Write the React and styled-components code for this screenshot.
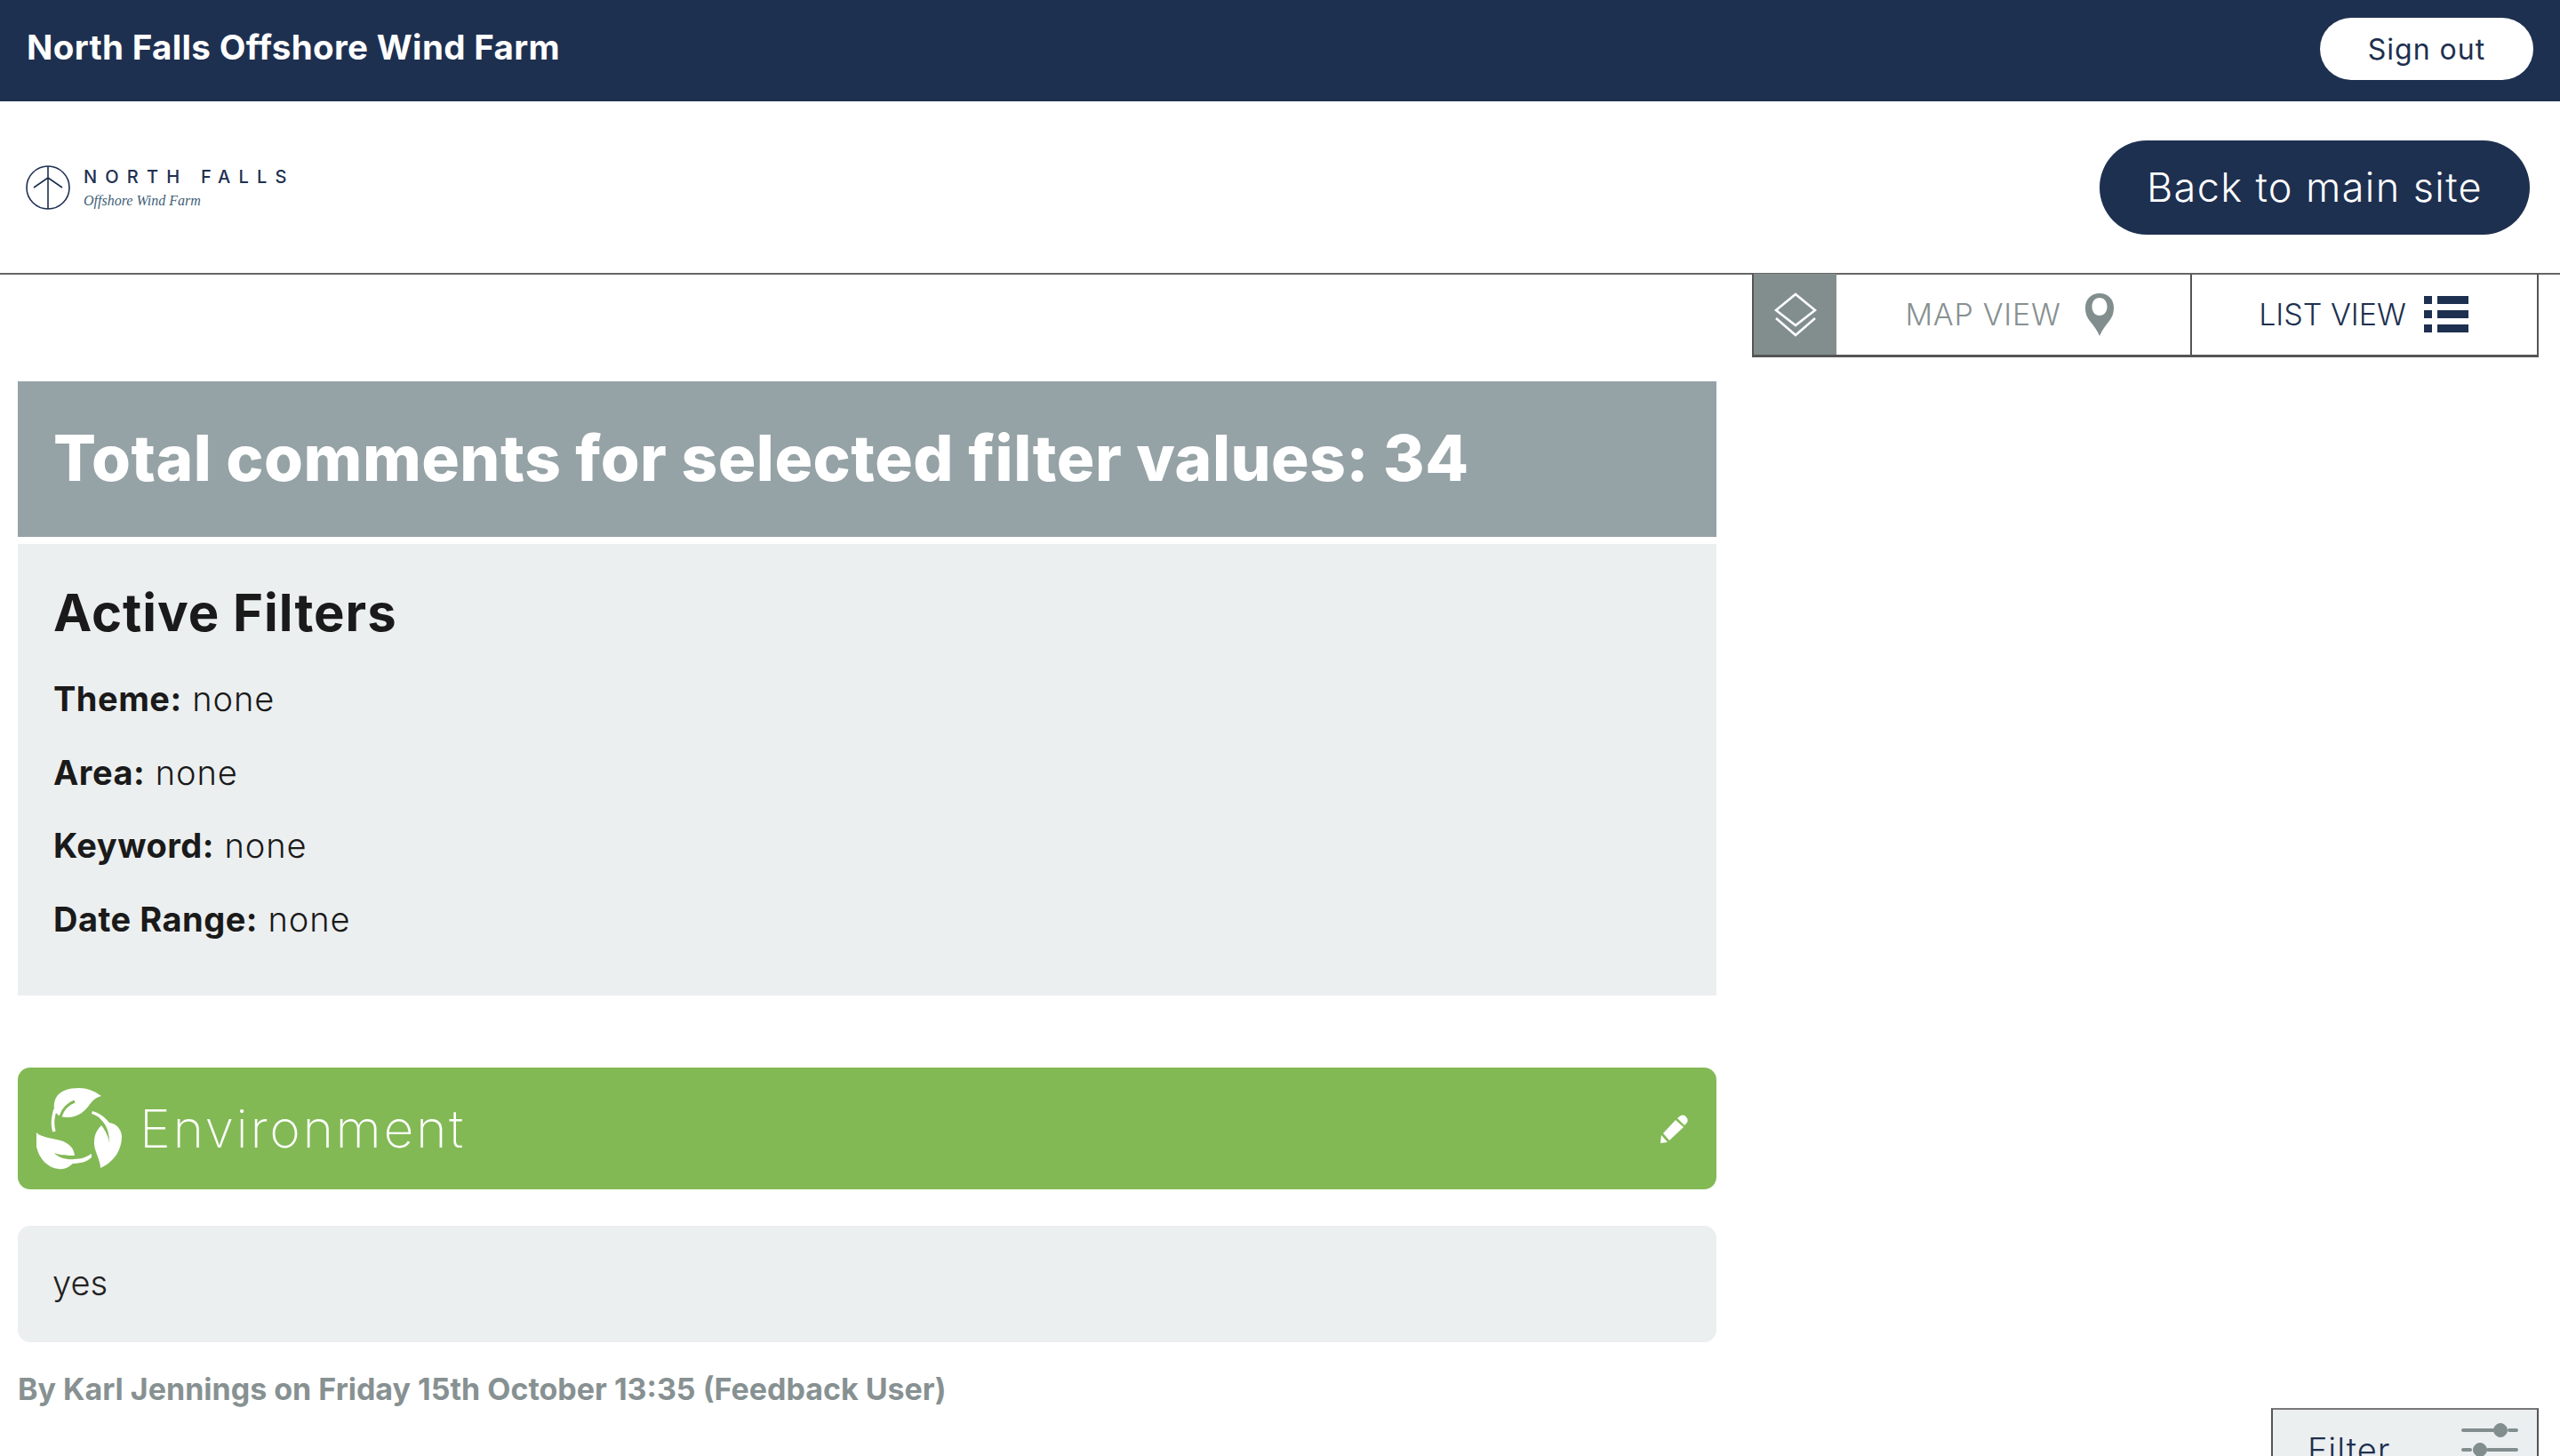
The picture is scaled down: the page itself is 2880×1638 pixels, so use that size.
import React from "react";
import styled, { createGlobalStyle } from "styled-components";

const Global = createGlobalStyle`
  html, body { margin: 0; padding: 0; background: #fff; overflow: hidden; }
  * { box-sizing: border-box; }
  body { font-family: Inter, "Liberation Sans", sans-serif; }
`;

const Page = styled.div`
  position: relative;
  width: 2880px;
  height: 1638px;
  overflow: hidden;
`;

const TopBar = styled.div`
  height: 114px;
  background: #1e3050;
  display: flex;
  align-items: flex-start;
  justify-content: space-between;
  padding: 20px 30px 0 30px;
`;

const SiteTitle = styled.div`
  color: #fff;
  font-size: 38.5px;
  font-weight: 700;
  line-height: 46px;
  margin-top: 10px;
  letter-spacing: 0.35px;
`;

const SignOut = styled.button`
  width: 240px;
  height: 70px;
  border: 0;
  border-radius: 35px;
  background: #fff;
  color: #1e3050;
  font: 400 32px Inter, sans-serif;
  letter-spacing: 1px;
`;

const Header = styled.div`
  height: 195px;
  border-bottom: 2px solid #666;
  display: flex;
  align-items: flex-start;
  justify-content: space-between;
  padding: 44px 34px 0 29px;
`;

const Logo = styled.div`
  display: flex;
  gap: 15px;
  margin-top: 28px;
`;

const LogoText = styled.div`
  display: flex;
  flex-direction: column;
`;

const LogoName = styled.div`
  color: #1e3050;
  font-size: 20px;
  line-height: 20px;
  font-weight: 500;
  letter-spacing: 9.2px;
  margin-top: 3px;
`;

const LogoSub = styled.div`
  color: #3f5f78;
  font: italic 400 16px/20px "Liberation Serif", serif;
  margin-top: 7px;
`;

const BackButton = styled.button`
  width: 484px;
  height: 106px;
  border: 0;
  border-radius: 53px;
  background: #1e3050;
  color: #fff;
  font: 300 45px Inter, sans-serif;
  letter-spacing: 1.4px;
  padding-bottom: 2px;
`;

const Content = styled.div`
  display: grid;
  grid-template-columns: 1971px 885px;
`;

const Main = styled.main`
  padding: 120px 40px 0 20px;
`;

const Banner = styled.div`
  height: 175px;
  background: #95a2a6;
  color: #fff;
  display: flex;
  align-items: center;
  padding: 0 40px 4px;
  font-size: 71px;
  font-weight: 800;
  letter-spacing: 0.5px;
`;

const FilterPanel = styled.section`
  margin-top: 8px;
  height: 508px;
  background: #eceff0;
  padding: 44px 40px 0;
  color: #1a1a1a;
`;

const FilterHeading = styled.h2`
  margin: 0 0 41px;
  font-size: 58px;
  line-height: 66px;
  font-weight: 700;
  letter-spacing: 1px;
`;

const FilterRow = styled.div`
  height: 82.5px;
  font-size: 38px;
  line-height: 46px;
  font-weight: 300;
  letter-spacing: 0.9px;
  b { font-weight: 700; letter-spacing: 0.5px; }
`;

const ThemeBar = styled.div`
  margin-top: 81px;
  height: 137px;
  border-radius: 14px;
  background: #82b955;
  color: #fff;
  display: flex;
  align-items: center;
  padding: 0 32px 0 20px;
`;

const ThemeName = styled.div`
  flex: 1;
  margin-left: 19px;
  font-size: 59px;
  font-weight: 200;
  letter-spacing: 2.6px;
`;

const Comment = styled.div`
  margin-top: 41px;
  height: 131px;
  border-radius: 14px;
  background: #eceff0;
  color: #222;
  font-size: 38px;
  font-weight: 300;
  display: flex;
  align-items: center;
  padding: 0 40px 4px 39px;
`;

const Byline = styled.div`
  margin-top: 32px;
  color: #879192;
  font-size: 34px;
  line-height: 42px;
  font-weight: 700;
  letter-spacing: 0;
`;

const Tabs = styled.nav`
  display: flex;
  height: 94px;
  margin-top: -1px;
  border: solid #555;
  border-width: 0 2px 3px 2px;
`;

const LayerTab = styled.div`
  width: 93px;
  background: #828e8e;
  display: flex;
  align-items: center;
  justify-content: center;
`;

const ViewTab = styled.div`
  display: flex;
  align-items: center;
  justify-content: center;
  gap: ${(p) => p.$gap}px;
  width: ${(p) => p.$width}px;
  padding-right: ${(p) => p.$inset}px;
  color: ${(p) => p.$color};
  font-size: 34px;
  font-weight: 300;
  letter-spacing: ${(p) => p.$tracking}px;
  & + & { border-left: 2px solid #555; }
`;

const FilterToggle = styled.div`
  position: absolute;
  left: 2555px;
  top: 1584px;
  width: 301px;
  height: 120px;
  background: #eceff0;
  border: 2px solid #555;
  border-top-color: #777;
  display: flex;
  justify-content: space-between;
  padding: 8px 20px 0 39px;
  color: #1e3050;
  font-size: 38px;
  font-weight: 300;
  letter-spacing: 1px;
`;

const FilterLabel = styled.div`
  line-height: 46px;
  margin-top: 14px;
`;

const ForestIcon = () => (
  <svg width="98" height="92" viewBox="0 0 98 92" fill="#fff">
    <path d="M74 9 C66 3 57 0 49 0 C38 0 27 3 23 11 C20 17 20 24 23 28 C26 32 31 33 36 33 C48 33 56 26 62 17 C66 12 70 10 74 9Z" />
    <path d="M44 15 C36 18 31 23 28 32" stroke="#82b955" strokeWidth="3" fill="none" />
    <path d="M22 24 C20 32 18 40 21 49" stroke="#fff" strokeWidth="3.5" fill="none" />
    <path d="M64 26 C72 28 78 33 83 39 C90 40 96 45 97 54 C97 66 92 76 85 82 C81 86 77 88 73 90 C73 80 65 70 66 60 C66 53 69 47 74 42 C78 47 82 54 83 62 C83 50 80 42 74 36 C71 32 67 30 63 29Z" />
    <path d="M1 50 C4 54 14 56 24 58 C34 60 43 65 44 76 C38 76 28 76 21 73 C26 79 36 81 44 80 C52 80 58 77 63 74 L63 78 C58 83 50 85 42 85 C36 90 32 92 26 91 C14 90 4 80 1 66Z" />
  </svg>
);

const PencilIcon = () => (
  <svg width="31" height="32" viewBox="0 0 31 32" fill="#fff">
    <path d="M19 4 L22 1.5 C24 0 26 0 28 1.5 L30 4 C31 6 31 8 29 10 L27 12Z" />
    <path d="M17 6 L26 14 L10 29 L3 21Z" />
    <path d="M1 23 L8 31 L0 32Z" />
  </svg>
);

const LayersIcon = () => (
  <svg width="48" height="50" viewBox="0 0 48 50" fill="none" stroke="#fff" strokeWidth="2.6">
    <path d="M24 2 L46 20 L24 37 L2 20Z" />
    <path d="M2 29 L24 48 L46 29" />
  </svg>
);

const PinIcon = () => (
  <svg width="34" height="48" viewBox="0 0 34 48" fill="#828e8e">
    <path fillRule="evenodd" d="M17 0 C7 0 1 7 1 16 C1 23 3 27 6 31 C10 36 14 41 17 48 C20 41 24 36 28 31 C31 27 33 23 33 16 C33 7 27 0 17 0Z M17 5 C22 5 25.5 9 25.5 15 C25.5 21 22 25 17 25 C12 25 8.5 21 8.5 15 C8.5 9 12 5 17 5Z" />
  </svg>
);

const ListIcon = () => (
  <svg width="50" height="41" viewBox="0 0 50 41" fill="#1e3050">
    <rect x="0" y="0" width="9" height="9" />
    <rect x="15" y="0" width="35" height="9" />
    <rect x="0" y="16" width="9" height="9" />
    <rect x="15" y="16" width="35" height="9" />
    <rect x="0" y="32" width="9" height="9" />
    <rect x="15" y="32" width="35" height="9" />
  </svg>
);

const SlidersIcon = () => (
  <svg width="65" height="60" viewBox="0 0 65 60" fill="#828e8e" stroke="#828e8e">
    <path d="M2 15 H36 M54 15 H62" strokeWidth="4" strokeLinecap="round" fill="none" />
    <circle cx="44" cy="15" r="7.5" />
    <path d="M2 37 H10 M30 37 H62" strokeWidth="4" strokeLinecap="round" fill="none" />
    <circle cx="21" cy="37" r="7.5" />
  </svg>
);

const TurbineLogo = () => (
  <svg width="50" height="50" viewBox="0 0 50 50" fill="none" stroke="#1e3050" strokeWidth="1.6">
    <ellipse cx="25" cy="25" rx="24" ry="24" />
    <path d="M25 1 V49 M25 14 L9 25 M25 14 L41 25" />
  </svg>
);

const filters = [
  ["Theme:", "none"],
  ["Area:", "none"],
  ["Keyword:", "none"],
  ["Date Range:", "none"],
];

export default function App() {
  return (
    <Page>
      <Global />
      <TopBar>
        <SiteTitle>North Falls Offshore Wind Farm</SiteTitle>
        <SignOut>Sign out</SignOut>
      </TopBar>
      <Header>
        <Logo>
          <TurbineLogo />
          <LogoText>
            <LogoName>NORTH FALLS</LogoName>
            <LogoSub>Offshore Wind Farm</LogoSub>
          </LogoText>
        </Logo>
        <BackButton>Back to main site</BackButton>
      </Header>
      <Content>
        <Main>
          <Banner>Total comments for selected filter values: 34</Banner>
          <FilterPanel>
            <FilterHeading>Active Filters</FilterHeading>
            {filters.map(([label, value]) => (
              <FilterRow key={label}>
                <b>{label}</b> {value}
              </FilterRow>
            ))}
          </FilterPanel>
          <ThemeBar>
            <ForestIcon />
            <ThemeName>Environment</ThemeName>
            <PencilIcon />
          </ThemeBar>
          <Comment>yes</Comment>
          <Byline>By Karl Jennings on Friday 15th October 13:35 (Feedback User)</Byline>
        </Main>
        <Tabs>
          <LayerTab>
            <LayersIcon />
          </LayerTab>
          <ViewTab $width={398} $gap={27} $inset={7} $tracking={0.7} $color="#879192">
            MAP VIEW <PinIcon />
          </ViewTab>
          <ViewTab $width={390} $gap={20} $inset={2} $tracking={0} $color="#1e3050">
            LIST VIEW <ListIcon />
          </ViewTab>
        </Tabs>
      </Content>
      <FilterToggle>
        <FilterLabel>Filter</FilterLabel>
        <SlidersIcon />
      </FilterToggle>
    </Page>
  );
}
